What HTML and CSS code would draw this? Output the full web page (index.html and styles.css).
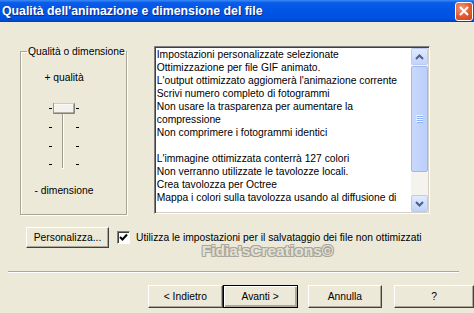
FILE: index.html
```html
<!DOCTYPE html>
<html lang="it">
<head>
    <meta charset="UTF-8">
    <title>Qualità dell'animazione e dimensione del file</title>
    <link rel="stylesheet" href="styles.css">
</head>
<body>
    <div class="window">
        <div class="titlebar">
            <span class="title">Qualità dell'animazione e dimensione del file</span>
            <span class="close">
                <svg width="12" height="12" viewBox="0 0 12 12">
                    <path d="M2 2 L10 10 M10 2 L2 10" stroke="#fff" stroke-width="2"/>
                </svg>
            </span>
        </div>

        <div class="content">
            <div class="main">
                <fieldset class="group">
                    <legend>Qualità o dimensione</legend>
                    <div class="group-body">
                        <div class="label-top">+ qualità</div>
                        <svg class="slider" width="32" height="70" viewBox="0 0 32 70">
                            <!-- ticks -->
                            <g fill="#000">
                                <rect x="1" y="7" width="3" height="1"/>
                                <rect x="28" y="7" width="3" height="1"/>
                                <rect x="1" y="26" width="3" height="1"/>
                                <rect x="28" y="26" width="3" height="1"/>
                                <rect x="1" y="45" width="3" height="1"/>
                                <rect x="28" y="45" width="3" height="1"/>
                                <rect x="1" y="63" width="3" height="1"/>
                                <rect x="28" y="63" width="3" height="1"/>
                            </g>
                            <!-- track -->
                            <rect x="14" y="4" width="1" height="64" fill="#9d9a8e"/>
                            <rect x="15" y="4" width="1" height="64" fill="#fff"/>
                            <rect x="14" y="67" width="2" height="1" fill="#fff"/>
                            <!-- thumb -->
                            <rect x="5.5" y="2.5" width="21" height="10" fill="#f3f2ec" stroke="#9d9a8e"/>
                            <path d="M6 3 H26" stroke="#fff"/>
                            <path d="M26 3 V12 H6" stroke="#6f6d64" fill="none"/>
                        </svg>
                        <div class="label-bottom">- dimensione</div>
                    </div>
                </fieldset>

                <div class="listbox">
                    <div class="list-text">
                        <div>Impostazioni personalizzate selezionate</div>
                        <div>Ottimizzazione per file GIF animato.</div>
                        <div>L'output ottimizzato aggiomerà l'animazione corrente</div>
                        <div>Scrivi numero completo di fotogrammi</div>
                        <div>Non usare la trasparenza per aumentare la compressione</div>
                        <div>Non comprimere i fotogrammi identici</div>
                        <div>&nbsp;</div>
                        <div>L'immagine ottimizzata conterrà 127 colori</div>
                        <div>Non verranno utilizzate le tavolozze locali.</div>
                        <div>Crea tavolozza per Octree</div>
                        <div>Mappa i colori sulla tavolozza usando al diffusione di</div>
                    </div>
                    <div class="scrollbar">
                        <div class="sb-btn">
                            <svg width="9" height="6" viewBox="0 0 9 6"><path d="M1 5 L4.5 1.5 L8 5" stroke="#4d6185" stroke-width="2" fill="none"/></svg>
                        </div>
                        <div class="sb-thumb">
                            <svg width="7" height="8" viewBox="0 0 7 8">
                                <g fill="#eef4fe"><rect x="0" y="0" width="7" height="1"/><rect x="0" y="2" width="7" height="1"/><rect x="0" y="4" width="7" height="1"/><rect x="0" y="6" width="7" height="1"/></g>
                                <g fill="#8cb0f8"><rect x="1" y="1" width="6" height="1"/><rect x="1" y="3" width="6" height="1"/><rect x="1" y="5" width="6" height="1"/><rect x="1" y="7" width="6" height="1"/></g>
                            </svg>
                        </div>
                        <div class="sb-track"></div>
                        <div class="sb-btn">
                            <svg width="9" height="6" viewBox="0 0 9 6"><path d="M1 1 L4.5 4.5 L8 1" stroke="#4d6185" stroke-width="2" fill="none"/></svg>
                        </div>
                    </div>
                </div>
            </div>

            <div class="options">
                <button class="btn btn-custom">Personalizza...</button>
                <label class="check">
                    <span class="box">
                        <svg width="9" height="9" viewBox="0 0 9 9"><path d="M1 4 L3.5 6.5 L8 1.5" stroke="#000" stroke-width="2" fill="none"/></svg>
                    </span>
                    Utilizza le impostazioni per il salvataggio dei file non ottimizzati
                </label>
            </div>

            <div class="watermark">Fidia'sCreations©</div>

            <div class="separator"></div>

            <div class="footer">
                <button class="btn">&lt; Indietro</button>
                <button class="btn btn-default">Avanti &gt;</button>
                <button class="btn btn-cancel">Annulla</button>
                <button class="btn btn-help">?</button>
            </div>
        </div>
    </div>
</body>
</html>
```

FILE: styles.css
```css
* {
    margin: 0;
    padding: 0;
    box-sizing: border-box;
}

body {
    width: 474px;
    height: 313px;
    overflow: hidden;
    background: #ece9d8;
    font-family: "Liberation Sans", Arial, sans-serif;
    font-size: 10.3px;
    color: #000;
}

.window {
    width: 474px;
    height: 313px;
}

.titlebar {
    height: 22px;
    display: flex;
    align-items: center;
    justify-content: space-between;
    padding-left: 2px;
    padding-right: 1px;
    background: linear-gradient(to bottom, #3a8cf8 0%, #0a5ce8 12%, #0055e5 50%, #0052e0 85%, #003fc0 100%);
}

.title {
    color: #fff;
    font-family: "Liberation Sans", Arial, sans-serif;
    font-weight: bold;
    font-size: 12.3px;
    text-shadow: 1px 1px #0a2a8a;
}

.close {
    width: 18px;
    height: 19px;
    display: flex;
    align-items: center;
    justify-content: center;
    border: 1px solid #fff;
    border-radius: 3px;
    background: radial-gradient(circle at 35% 30%, #f09a78 0%, #e2582f 55%, #c8421c 100%);
}

.content {
    padding: 24px 0 0 0;
}

.main {
    display: flex;
    align-items: flex-start;
    padding-left: 20px;
    gap: 27px;
}

.group {
    width: 105px;
    height: 170px;
    border: 1px solid #a8a596;
    box-shadow: inset 1px 1px #fff, 1px 1px #fff;
    margin-top: -1px;
}

.group legend {
    margin-left: 6px;
    padding: 0 1px;
    line-height: 13px;
    white-space: nowrap;
}

.group-body {
    width: 86px;
    display: flex;
    flex-direction: column;
    align-items: center;
}

.label-top {
    margin-top: 13px;
    line-height: 13px;
}

.slider {
    display: block;
    margin-top: 17px;
}

.label-bottom {
    margin-top: 13px;
    line-height: 13px;
}

.listbox {
    width: 276px;
    height: 168px;
    display: flex;
    background: #fff;
    border: 1px solid;
    border-color: #808080 #fff #fff #808080;
    box-shadow: inset 1px 1px #404040, inset -1px -1px #d4d0c8;
    padding: 1px;
}

.list-text {
    flex: 1;
    padding-left: 1px;
    line-height: 13px;
    overflow: hidden;
}

.scrollbar {
    width: 17px;
    display: flex;
    flex-direction: column;
    background: #f4f3ee;
}

.sb-btn {
    height: 17px;
    display: flex;
    align-items: center;
    justify-content: center;
    background: linear-gradient(to bottom, #e2eafe, #c1d3fb);
    border: 1px solid #bccbf4;
    border-radius: 2px;
}

.sb-thumb {
    height: 106px;
    display: flex;
    align-items: center;
    justify-content: center;
    background: linear-gradient(to right, #c9d8fc, #bacffb);
    border: 1px solid #9db8f4;
    border-radius: 2px;
    margin-top: 1px;
}

.sb-track {
    flex: 1;
}

.options {
    display: flex;
    align-items: center;
    padding-left: 26px;
    margin-top: 12px;
    gap: 8px;
}

.btn {
    font-family: "Liberation Sans", Arial, sans-serif;
    font-size: 10.3px;
    color: #000;
    background: #ece9d8;
    height: 23px;
    width: 75px;
    border: 1px solid;
    border-color: #fff #404040 #404040 #fff;
    box-shadow: inset -1px -1px #aca899;
}

.btn-custom {
    width: 83px;
    height: 21px;
}

.btn-default {
    border-color: #000;
    box-shadow: inset 1px 1px #fff, inset -2px -2px #aca899;
}

.check {
    display: flex;
    align-items: center;
    gap: 6px;
}

.box {
    width: 13px;
    height: 13px;
    display: flex;
    align-items: center;
    justify-content: center;
    background: #fff;
    border: 1px solid;
    border-color: #808080 #fff #fff #808080;
    box-shadow: inset 1px 1px #404040;
}

.watermark {
    text-align: center;
    padding-left: 61px;
    font-family: "Liberation Sans", Arial, sans-serif;
    font-weight: bold;
    font-size: 15.5px;
    line-height: 14px;
    color: #e4e1d4;
    text-shadow: -1px -1px #a8a59a, 1px -1px #a8a59a, -1px 1px #a8a59a, 1px 1px #a8a59a;
    margin-top: -4px;
}

.separator {
    width: 451px;
    margin-left: 8px;
    margin-top: 13px;
    border-top: 1px solid #aca899;
    border-bottom: 1px solid #fff;
}

.footer {
    display: flex;
    padding-left: 148px;
    margin-top: 12px;
}

.btn-cancel {
    margin-left: 10px;
}

.btn-help {
    margin-left: 12px;
    width: 80px;
}
```
